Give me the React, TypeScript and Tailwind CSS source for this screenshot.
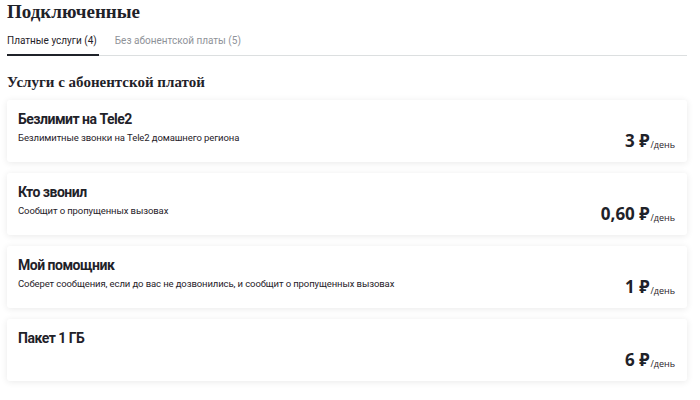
const SERIF = "font-['Liberation_Serif','DejaVu_Serif',serif]";

type Service = {
  title: string;
  description?: string;
  price: string;
};

const SERVICES: Service[] = [
  {
    title: "Безлимит на Tele2",
    description: "Безлимитные звонки на Tele2 домашнего региона",
    price: "3",
  },
  {
    title: "Кто звонил",
    description: "Сообщит о пропущенных вызовах",
    price: "0,60",
  },
  {
    title: "Мой помощник",
    description:
      "Соберет сообщения, если до вас не дозвонились, и сообщит о пропущенных вызовах",
    price: "1",
  },
  { title: "Пакет 1 ГБ", price: "6" },
];

function ServiceCard({ service }: { service: Service }) {
  return (
    <div className="flex h-[62px] items-stretch justify-between rounded-[3px] bg-white pl-[11px] pr-[12px] shadow-[0_1px_7px_rgba(0,0,0,0.09)]">
      <div className="pt-[10px] font-['Roboto',sans-serif]">
        <div className="text-[14px] font-bold leading-[18px] tracking-[-0.5px] text-[#1f2229]">
          {service.title}
        </div>
        {service.description && (
          <div className="mt-[3px] text-[9.5px] leading-[13px] tracking-[-0.1px] text-[#1f2229]">
            {service.description}
          </div>
        )}
      </div>
      <div className="flex items-end pb-[11px]">
        <span className="text-[17px] font-bold leading-[20px] text-[#1f2229]">
          {service.price} ₽
        </span>
        <span className="ml-[1px] text-[9px] leading-[12px] text-[#1f2229]">
          /день
        </span>
      </div>
    </div>
  );
}

export default function App() {
  return (
    <div className="min-h-[400px] w-[700px] bg-white px-[7px] font-['Open_Sans','Noto_Sans',sans-serif] text-[#1f2229]">
      <h1 className={`${SERIF} text-[19px] font-bold leading-[24px]`}>
        Подключенные
      </h1>
      <div className="mt-[10px] mr-[6px] flex border-b border-[#dcdfe0] font-['Roboto',sans-serif] text-[10px] leading-[13px]">
        <div className="-mb-px border-b-2 border-[#1f2229] pb-[7px] pr-[2px] text-[#1f2229]">
          Платные услуги (4)
        </div>
        <div className="ml-[16px] pb-[7px] text-[#8f9399]">
          Без абонентской платы (5)
        </div>
      </div>
      <h2 className={`${SERIF} mt-[16px] text-[15px] font-bold leading-[20px]`}>
        Услуги с абонентской платой
      </h2>
      <div className="mt-[8px] mr-[6px] flex flex-col gap-[11px]">
        {SERVICES.map((s) => (
          <ServiceCard key={s.title} service={s} />
        ))}
      </div>
    </div>
  );
}
